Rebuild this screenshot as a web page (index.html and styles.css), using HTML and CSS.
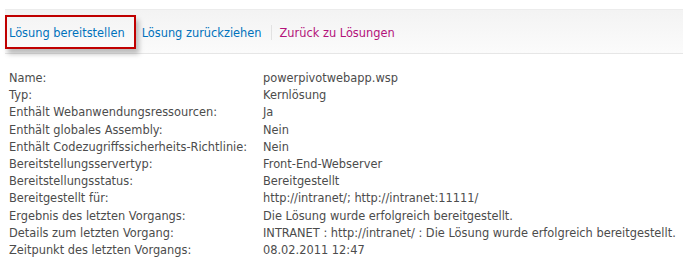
FILE: index.html
```html
<!DOCTYPE html>
<html lang="de">

<head>
    <meta charset="UTF-8">
    <title>Lösungseigenschaften</title>
    <link rel="stylesheet" href="styles.css">
</head>

<body>
    <div class="toolbar">
        <a class="action highlight" href="#">Lösung bereitstellen</a>
        <a class="action" href="#">Lösung zurückziehen</a>
        <span class="sep"></span>
        <a class="action back" href="#">Zurück zu Lösungen</a>
    </div>

    <div class="props">
        <div class="label">Name:</div>
        <div class="value">powerpivotwebapp.wsp</div>
        <div class="label">Typ:</div>
        <div class="value">Kernlösung</div>
        <div class="label">Enthält Webanwendungsressourcen:</div>
        <div class="value">Ja</div>
        <div class="label">Enthält globales Assembly:</div>
        <div class="value">Nein</div>
        <div class="label">Enthält Codezugriffssicherheits-Richtlinie:</div>
        <div class="value">Nein</div>
        <div class="label">Bereitstellungsservertyp:</div>
        <div class="value">Front-End-Webserver</div>
        <div class="label">Bereitstellungsstatus:</div>
        <div class="value">Bereitgestellt</div>
        <div class="label">Bereitgestellt für:</div>
        <div class="value">http://intranet/; http://intranet:11111/</div>
        <div class="label">Ergebnis des letzten Vorgangs:</div>
        <div class="value">Die Lösung wurde erfolgreich bereitgestellt.</div>
        <div class="label">Details zum letzten Vorgang:</div>
        <div class="value">INTRANET : http://intranet/ : Die Lösung wurde erfolgreich bereitgestellt.</div>
        <div class="label">Zeitpunkt des letzten Vorgangs:</div>
        <div class="value">08.02.2011 12:47</div>
    </div>
</body>

</html>
```

FILE: styles.css
```css
* {
    margin: 0;
    padding: 0;
    box-sizing: border-box;
}

body {
    font-family: 'DejaVu Sans', Verdana, sans-serif;
    font-size: 11.4px;
    color: #4c4c4c;
    background: #fff;
    padding: 9px 0 0 5px;
    overflow: hidden;
}

/* Action bar */
.toolbar {
    display: flex;
    align-items: center;
    height: 45px;
    background: linear-gradient(#f3f3f3, #fbfbfb);
    border-top: 1px solid #ececec;
    border-bottom: 1px solid #e6e6e6;
    white-space: nowrap;
}

.action {
    color: #0072bc;
    text-decoration: none;
    padding: 0 9px 0 0;
    margin-top: 2px;
}

.action.highlight {
    align-self: flex-start;
    margin-top: 5px;
    height: 34px;
    display: flex;
    align-items: center;
    padding: 2px 9px 0 2px;
    margin-right: 6px;
    border: 2px solid #c00000;
    box-shadow: 3px 5px 5px rgba(0, 0, 0, 0.25);
}

.sep {
    width: 1px;
    height: 15px;
    background: #e2e2e2;
    margin: 2px 8px 0 0;
}

.action.back {
    color: #b3127a;
}

/* Properties list */
.props {
    display: grid;
    grid-template-columns: 254px 1fr;
    grid-auto-rows: 17.2px;
    margin-top: 17px;
    padding-left: 4px;
    white-space: nowrap;
}
```
